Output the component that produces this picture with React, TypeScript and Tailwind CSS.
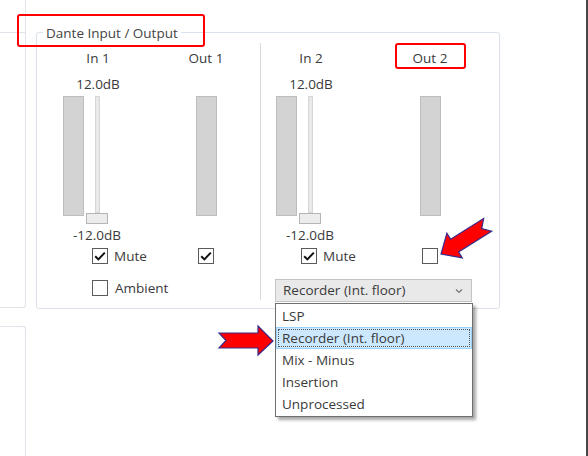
import React from "react";

const font = { fontFamily: '"Open Sans", "Noto Sans", "Liberation Sans", sans-serif' };

function CheckBox({ checked }: { checked?: boolean }) {
  return (
    <div className="w-[16px] h-[16px] border border-[#5a5a5a] bg-white flex items-center justify-center shrink-0">
      {checked && (
        <svg width="14" height="14" viewBox="0 0 14 14">
          <polyline points="2.2,7.2 5.4,10.4 11.8,3.6" fill="none" stroke="#111" strokeWidth="2" />
        </svg>
      )}
    </div>
  );
}

function InChannel({ name, muteOffset }: { name: string; muteOffset: string }) {
  return (
    <div className="w-[80px] flex flex-col">
      <div className="h-[18px] leading-[18px] text-center">{name}</div>
      <div className="mt-[8px] h-[18px] leading-[18px] text-center">12.0dB</div>
      <div className="mt-[3px] h-[128px] flex pl-[5px]">
        <div className="w-[21px] h-[120px] bg-[#d3d3d3] border border-[#bdbdbd]" />
        <div className="ml-[2px] w-[22px] flex flex-col items-center">
          <div className="w-[5px] flex-1 bg-[#e9e9e9] border border-[#d6d6d6]" />
          <div className="w-[22px] h-[11px] bg-[#ececec] border border-[#b5b5b5]" />
        </div>
      </div>
      <div className="mt-[2px] h-[18px] leading-[18px] text-center pr-[2px] whitespace-nowrap">-12.0dB</div>
      <div className={`mt-[4px] flex items-center gap-[6px] ${muteOffset}`}>
        <CheckBox checked />
        <span className="leading-[16px]">Mute</span>
      </div>
    </div>
  );
}

function OutChannel({ name, checked }: { name: string; checked?: boolean }) {
  return (
    <div className="w-[60px] flex flex-col">
      <div className="h-[18px] leading-[18px] text-center">{name}</div>
      <div className="mt-[8px] h-[18px]" />
      <div className="mt-[3px] h-[128px] flex justify-center">
        <div className="w-[21px] h-[120px] bg-[#d3d3d3] border border-[#bdbdbd]" />
      </div>
      <div className="mt-[2px] h-[18px]" />
      <div className="mt-[4px] flex justify-center">
        <CheckBox checked={checked} />
      </div>
    </div>
  );
}

const options = ["LSP", "Recorder (Int. floor)", "Mix - Minus", "Insertion", "Unprocessed"];

export default function App() {
  return (
    <div
      className="relative w-[588px] h-[456px] bg-white overflow-hidden flex text-[13.5px] text-[#3a3a3a] border-r-2 border-[#474747]"
      style={font}
    >
      {/* left side panels */}
      <div className="w-[26px] flex flex-col shrink-0">
        <div className="h-[308px] border-r border-b border-[#dfe4ea] rounded-br-[3px]">
          <div className="h-[33px] border-b border-[#dfe4ea]" />
        </div>
        <div className="mt-[18px] flex-1 border-r border-t border-[#dfe4ea] rounded-tr-[3px]" />
      </div>

      {/* group box */}
      <div className="ml-[10px] mt-[32px] w-[464px] h-[277px] border border-[#dbe1e8] rounded-[3px] relative flex">
        <span className="absolute -top-[9px] left-[6px] bg-white px-[3px] leading-[18px] text-[#444] whitespace-nowrap">
          Dante Input / Output
        </span>

        {/* left column */}
        <div className="w-[223px] flex flex-col pt-[16px]">
          <div className="flex pl-[21px] gap-[38px]">
            <InChannel name="In 1" muteOffset="pl-[34px]" />
            <OutChannel name="Out 1" checked />
          </div>
          <div className="mt-[16px] pl-[55px] flex items-center gap-[7px]">
            <CheckBox />
            <span className="leading-[16px]">Ambient</span>
          </div>
        </div>

        <div className="w-px bg-[#d6dadf] mt-[10px] mb-[8px]" />

        {/* right column */}
        <div className="flex-1 flex flex-col pt-[16px]">
          <div className="flex pl-[10px] gap-[49px]">
            <InChannel name="In 2" muteOffset="pl-[30px]" />
            <OutChannel name="Out 2" />
          </div>
          <div className="mt-[15px] ml-[14px] w-[197px] h-[23px] border border-[#c4c4c4] bg-[#e9e9e9] flex items-center justify-between pl-[7px] pr-[8px]">
            <span className="whitespace-nowrap">Recorder (Int. floor)</span>
            <svg width="8" height="6" viewBox="0 0 8 6">
              <polyline points="1,1.5 4,4.5 7,1.5" fill="none" stroke="#777" strokeWidth="1.2" />
            </svg>
          </div>
        </div>
      </div>

      {/* dropdown list popup */}
      <div className="absolute left-[275px] top-[303px] w-[198px] border border-[#6e6e6e] bg-white pt-[1px] pb-[1px] shadow-[3px_3px_3px_rgba(0,0,0,0.35)]">
        {options.map((o, i) => (
          <div
            key={o}
            className={
              i === 1
                ? "h-[22px] leading-[20px] pl-[5px] bg-[#cce8ff] border border-[#99d1ff] outline-1 outline-dotted outline-[#555] -outline-offset-[3px] whitespace-nowrap"
                : "h-[22px] leading-[22px] pl-[6px] whitespace-nowrap"
            }
          >
            {o}
          </div>
        ))}
      </div>

      {/* red annotation boxes */}
      <div className="absolute left-[17px] top-[14px] w-[188px] h-[33px] border-2 border-[#ff0000] rounded-[3px]" />
      <div className="absolute left-[395px] top-[43px] w-[71px] h-[26px] border-2 border-[#ff0000] rounded-[3px]" />

      {/* red arrows */}
      <svg className="absolute left-0 top-0 pointer-events-none" width="588" height="456">
        <polygon
          points="219,333 258,333 258,326 273,341 258,355 258,348 219,348 226,340.5"
          fill="#ff0000"
          stroke="#3b2a8a"
          strokeWidth="1.2"
        />
        <g transform="translate(441,254) rotate(148)">
          <polygon
            points="-55,-7.5 -16,-7.5 -16,-14.5 0,0 -16,14.5 -16,7.5 -55,7.5 -48,0"
            fill="#ff0000"
            stroke="#3b2a8a"
            strokeWidth="1.2"
          />
        </g>
      </svg>
    </div>
  );
}
